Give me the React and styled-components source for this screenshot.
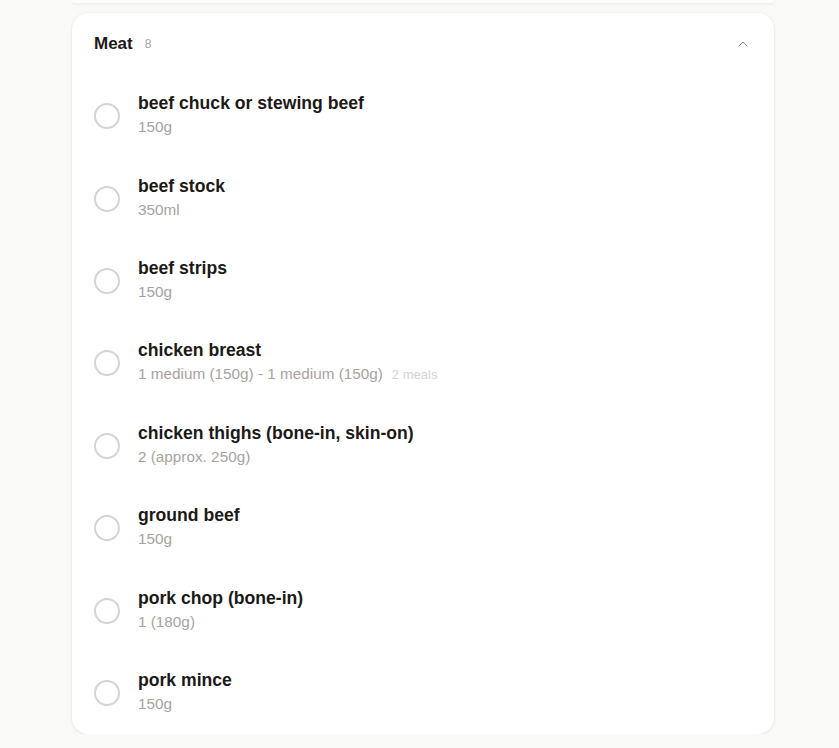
import React, { useState } from 'react';
import styled, { createGlobalStyle } from 'styled-components';
import { ChevronUp } from 'lucide-react';

const GlobalStyle = createGlobalStyle`
  html, body {
    margin: 0;
    padding: 0;
    background: #f9f9f8;
    font-family: "Liberation Sans", Arial, sans-serif;
  }
`;

const Page = styled.div`
  width: 702px;
  margin: 0 auto 0 72px;
  display: flex;
  flex-direction: column;
  gap: 10px;
`;

const PrevCard = styled.div`
  height: 3px;
  background: #fff;
  border-radius: 0 0 16px 16px;
  box-shadow: 0 1px 3px rgba(0, 0, 0, 0.06);
`;

const Card = styled.section`
  background: #fff;
  border-radius: 16px;
  box-shadow: 0 1px 3px rgba(0, 0, 0, 0.08), 0 0 0 1px rgba(0, 0, 0, 0.02);
  overflow: hidden;
`;

const Header = styled.button`
  display: flex;
  align-items: center;
  width: 100%;
  height: 62px;
  padding: 0 23px 0 22px;
  border: none;
  background: none;
  cursor: pointer;
  font-family: inherit;
`;

const Title = styled.span`
  font-size: 17px;
  font-weight: 700;
  color: #1c1917;
`;

const Count = styled.span`
  margin-left: 12px;
  font-size: 12px;
  color: #a8a29e;
`;

const Chevron = styled(ChevronUp)`
  margin-left: auto;
  color: #8f8a86;
`;

const List = styled.ul`
  list-style: none;
  margin: 0;
  padding: 0;
`;

const Row = styled.li`
  display: flex;
  align-items: center;
  height: 82.4px;
  padding: 0 22px;
  gap: 18px;
`;

const Check = styled.button`
  flex: none;
  width: 26px;
  height: 26px;
  border-radius: 50%;
  border: 2px solid ${(p) => (p.$done ? '#16a34a' : '#d6d3d1')};
  background: ${(p) => (p.$done ? '#16a34a' : '#fff')};
  padding: 0;
  cursor: pointer;
`;

const Info = styled.div`
  display: flex;
  flex-direction: column;
  gap: 3px;
  padding-bottom: 3px;
`;

const Name = styled.span`
  font-size: 17.6px;
  font-weight: 700;
  color: #1c1917;
  line-height: 22px;
  text-decoration: ${(p) => (p.$done ? 'line-through' : 'none')};
`;

const Amount = styled.span`
  font-size: 15.3px;
  color: #a8a29e;
  line-height: 20px;
`;

const Meals = styled.span`
  margin-left: 9px;
  font-size: 13px;
  color: #d6d3d1;
`;

const items = [
  { name: 'beef chuck or stewing beef', amount: '150g' },
  { name: 'beef stock', amount: '350ml' },
  { name: 'beef strips', amount: '150g' },
  { name: 'chicken breast', amount: '1 medium (150g) - 1 medium (150g)', meals: 2 },
  { name: 'chicken thighs (bone-in, skin-on)', amount: '2 (approx. 250g)' },
  { name: 'ground beef', amount: '150g' },
  { name: 'pork chop (bone-in)', amount: '1 (180g)' },
  { name: 'pork mince', amount: '150g' },
];

export default function App() {
  const [done, setDone] = useState({});
  const [open, setOpen] = useState(true);

  return (
    <>
      <GlobalStyle />
      <Page>
        <PrevCard />
        <Card>
          <Header onClick={() => setOpen(!open)}>
            <Title>Meat</Title>
            <Count>{items.length}</Count>
            <Chevron size={16} strokeWidth={1.5} />
          </Header>
          {open && (
            <List>
              {items.map((item) => (
                <Row key={item.name}>
                  <Check
                    $done={done[item.name]}
                    onClick={() => setDone({ ...done, [item.name]: !done[item.name] })}
                  />
                  <Info>
                    <Name $done={done[item.name]}>{item.name}</Name>
                    <Amount>
                      {item.amount}
                      {item.meals && <Meals>{item.meals} meals</Meals>}
                    </Amount>
                  </Info>
                </Row>
              ))}
            </List>
          )}
        </Card>
      </Page>
    </>
  );
}
